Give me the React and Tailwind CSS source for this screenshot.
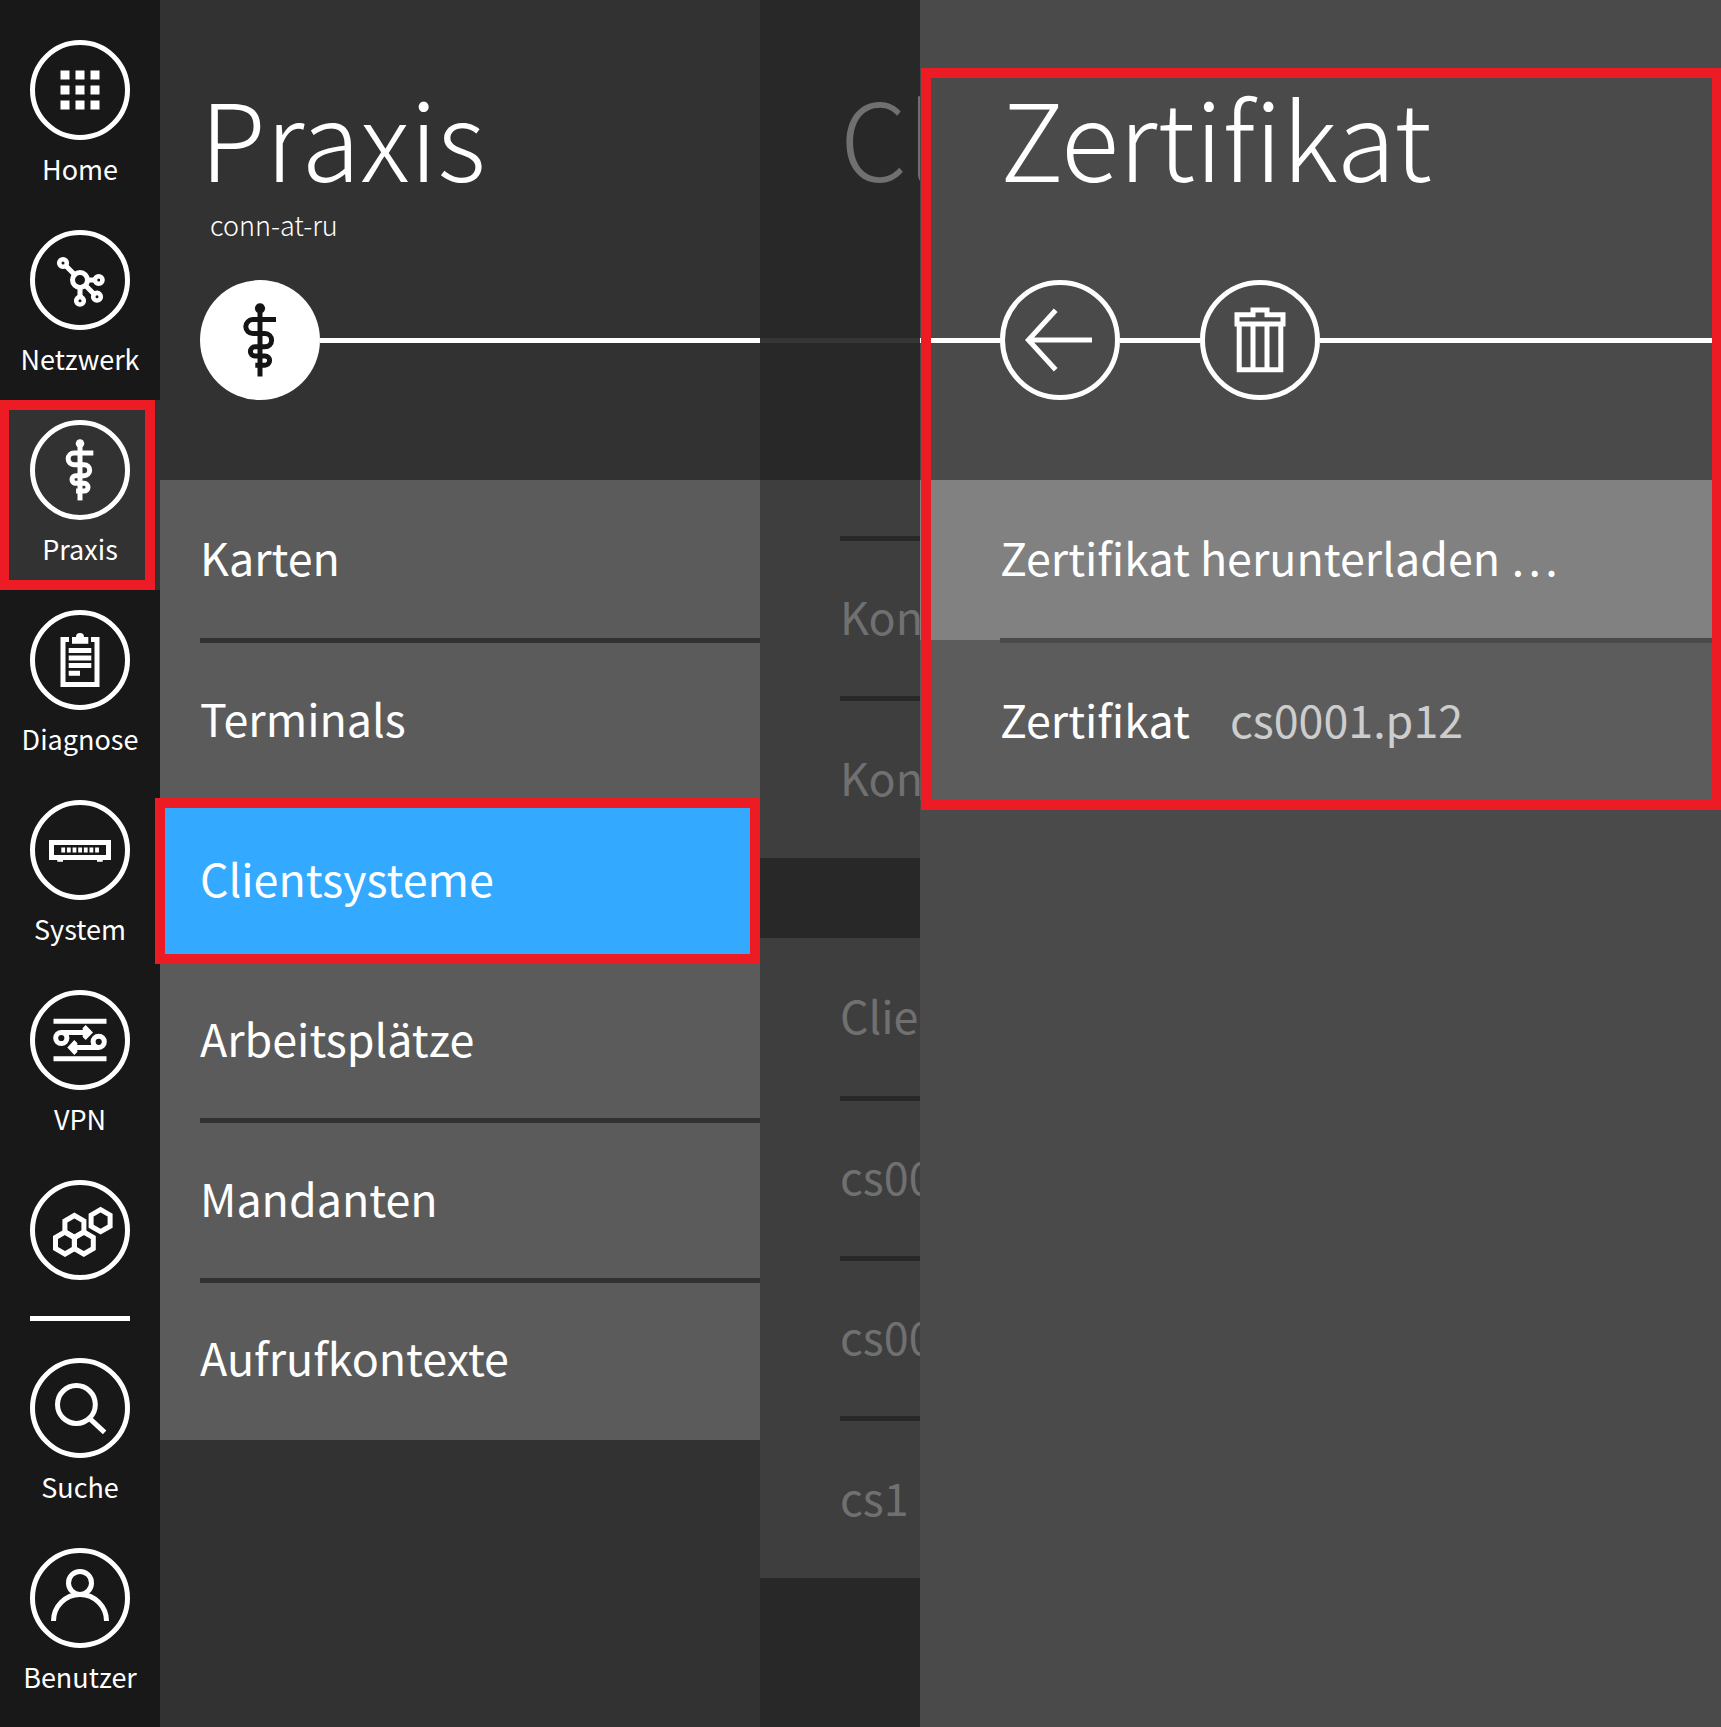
const FONT = "font-['Noto_Sans_CJK_SC','Source_Sans_Pro',sans-serif]";

function Rod({ className, stroke }) {
  return (
    <svg viewBox="0 0 120 120" className={className} fill="none" stroke="currentColor" strokeWidth={stroke}>
      <circle cx="60" cy="28.3" r="5.1" fill="currentColor" stroke="none" />
      <path d="M60 30V96.5" />
      <path d="M76 39.6H52.8a7 7 0 0 0 0 14H65a6.6 6.6 0 0 1 0 13.2H55a4.6 4.6 0 0 0 0 9.2H65a4.6 4.6 0 0 1 0 9.2H55.3" />
    </svg>
  );
}

function hex(cx, cy) {
  return `M${cx} ${cy - 11}l9.5 5.5v11l-9.5 5.5l-9.5 -5.5v-11z`;
}

const glyphs = {
  home: (
    <g fill="currentColor" stroke="none">
      {[30.5, 45.5, 60.5].map((y) =>
        [30.5, 45.5, 60.5].map((x) => <rect key={`${x}-${y}`} x={x} y={y} width="9" height="9" />)
      )}
    </g>
  ),
  network: (
    <g>
      <circle cx="50" cy="50" r="7.5" />
      <path d="M36 36L45 45M57 50H64M50 57V66M55 55L64 64" />
      <g strokeWidth="4.6">
        <circle cx="33" cy="33" r="3.8" />
        <circle cx="68.7" cy="50" r="3.8" />
        <circle cx="50" cy="70.7" r="3.8" />
        <circle cx="67" cy="66.7" r="3.8" />
      </g>
    </g>
  ),
  clipboard: (
    <g>
      <path d="M39 29.5H33V74.5H67V29.5H61" />
      <path d="M42 33.8V27H46a4 4 0 0 1 8 0H58.3V33.8z" fill="currentColor" stroke="none" />
      <path d="M38.7 40.5H61.3M38.7 48H61.3M38.7 55.6H61.3M38.7 63.2H50" />
    </g>
  ),
  system: (
    <g>
      <rect x="21.5" y="42.5" width="57" height="15" />
      <path d="M27.3 60.8H33M67 60.8H72.7" strokeWidth="2" />
      <path d="M31.3 50H69" strokeDasharray="3.8 1.84" />
    </g>
  ),
  vpn: (
    <g>
      <path d="M23.5 31.2H76.5M23.5 68.8H76.5" />
      <circle cx="31.3" cy="48" r="5.6" />
      <circle cx="68.7" cy="51.8" r="5.6" />
      <path d="M31.3 42.4H55M68.7 57.4H45" />
      <path d="M52.7 38L55.7 35L63 42.4L55.7 50L52.7 47zM47.3 53L44.3 50L37.3 57.4L44.3 65L47.3 62z" fill="currentColor" stroke="none" />
    </g>
  ),
  modules: (
    <g>
      <path d={hex(44.4, 46.5)} />
      <path d={hex(35, 63)} />
      <path d={hex(53.8, 63)} />
      <path d={hex(70.6, 40.7)} />
    </g>
  ),
  search: (
    <g>
      <circle cx="46.4" cy="46.5" r="18.9" />
      <path d="M59.5 60.3L74.6 74.4" />
    </g>
  ),
  user: (
    <g>
      <circle cx="50" cy="34.9" r="11.5" />
      <path d="M23.5 73A26.5 26.5 0 0 1 76.5 73" />
    </g>
  ),
};

function NavItem({ icon, label, active }) {
  return (
    <div className={`relative flex h-[190px] w-40 shrink-0 flex-col items-center pt-5 ${active ? "bg-[#323232]" : ""}`}>
      <div className="h-[100px] w-[100px] rounded-full border-[5px] border-white">
        {icon === "rod" ? (
          <Rod className="-m-[5px] h-[100px] w-[100px]" stroke="6" />
        ) : (
          <svg viewBox="0 0 100 100" className="-m-[5px] h-[100px] w-[100px]" fill="none" stroke="currentColor" strokeWidth="5">
            {glyphs[icon]}
          </svg>
        )}
      </div>
      {label && <div className="mt-[9px] text-[27px] leading-[40px] whitespace-nowrap">{label}</div>}
      {active && <div className="absolute top-0 -left-px h-[190px] w-[156px] border-[10px] border-[#ed1c24]" />}
    </div>
  );
}

function Row({ children, indent, line, bg, last, pad = "pb-1" }) {
  return (
    <div className={`flex h-40 flex-col ${indent} ${bg || ""}`}>
      <div className={`flex h-[158px] shrink-0 items-center gap-10 text-[44.8px] leading-[45px] whitespace-nowrap ${pad}`}>{children}</div>
      {!last && <div className={`relative z-10 h-[5px] shrink-0 ${line}`} />}
    </div>
  );
}

function Sidebar() {
  return (
    <nav className="flex w-40 shrink-0 flex-col bg-[#181818] pt-5">
      <NavItem icon="home" label="Home" />
      <NavItem icon="network" label="Netzwerk" />
      <NavItem icon="rod" label="Praxis" active />
      <NavItem icon="clipboard" label="Diagnose" />
      <NavItem icon="system" label="System" />
      <NavItem icon="vpn" label="VPN" />
      <div className="h-[156px] shrink-0">
        <NavItem icon="modules" />
      </div>
      <div className="mx-[30px] mb-[17px] h-[5px] shrink-0 bg-white" />
      <NavItem icon="search" label="Suche" />
      <NavItem icon="user" label="Benutzer" />
    </nav>
  );
}

function PraxisPanel() {
  const entries = ["Karten", "Terminals", "Clientsysteme", "Arbeitsplätze", "Mandanten", "Aufrufkontexte"];
  return (
    <section className="w-[600px] shrink-0 bg-[#323232]">
      <header className="h-[480px] pl-10">
        <h1 className="h-[195px] pt-[82px] text-[107.3px] leading-[108px] font-light">Praxis</h1>
        <div className="h-[85px] pt-[8px] pl-[10px] text-[27px] leading-[44px] font-light">conn-at-ru</div>
        <div className="flex items-center">
          <div className="h-[120px] w-[120px] rounded-full bg-white text-[#141414]">
            <Rod className="h-[120px] w-[120px]" stroke="5" />
          </div>
          <div className="mt-px h-[5px] flex-1 bg-white" />
        </div>
      </header>
      <div className="h-[960px] bg-[#5b5b5b]">
        {entries.map((e, i) =>
          e === "Clientsysteme" ? (
            <div key={e} className="relative bg-[#33a9ff]">
              <Row indent="pl-10" last>{e}</Row>
              <div className="absolute -top-[2px] -left-[5px] z-20 h-[166px] w-[605px] border-[10px] border-[#ed1c24]" />
            </div>
          ) : (
            <Row
              key={e}
              indent="pl-10"
              line="bg-[#323232]"
              last={i === entries.length - 1}
              pad={i === 0 || i === entries.length - 1 ? "pb-1.5" : "pb-1"}
            >
              {e}
            </Row>
          )
        )}
      </div>
    </section>
  );
}

function DimmedPanel() {
  return (
    <section className="w-40 shrink-0 overflow-hidden bg-[#282828] text-[#707070]">
      <header className="h-[480px]">
        <h1 className="h-[338px] pt-[82px] pl-20 text-[107.3px] leading-[108px] font-light whitespace-nowrap">Cl</h1>
        <div className="h-[5px] bg-[#353535]" />
      </header>
      <div className="h-[378px] bg-[#3e3e3e] pt-[56px]">
        <div className="ml-20 h-[5px] bg-[#282828]" />
        <div className="-mt-[3px]">
          <Row indent="pl-20" line="bg-[#282828]">Kon</Row>
          <Row indent="pl-20" pad="pb-0.5" last>Kon</Row>
        </div>
      </div>
      <div className="mt-20 h-[640px] bg-[#3e3e3e]">
        <Row indent="pl-20" line="bg-[#282828]" pad="pb-1.5">Clie</Row>
        <Row indent="pl-20" line="bg-[#282828]">cs00</Row>
        <Row indent="pl-20" line="bg-[#282828]">cs00</Row>
        <Row indent="pl-20" pad="pb-0.5" last>cs1</Row>
      </div>
    </section>
  );
}

function CertificatePanel() {
  return (
    <section className="relative w-[801px] shrink-0 bg-[#4a4a4a]">
      <header className="h-[480px]">
        <h1 className="h-[280px] pt-[82px] pl-20 text-[107.3px] leading-[108px] font-light [font-variant-ligatures:none]">
          Zertifikat
        </h1>
        <div className="flex items-center">
          <div className="mt-px h-[5px] w-20 bg-white" />
          <div className="h-[120px] w-[120px] rounded-full border-[5px] border-white">
            <svg viewBox="0 0 120 120" className="-m-[5px] h-[120px] w-[120px]" fill="none" stroke="currentColor" strokeWidth="5">
              <path d="M55.7 30.2L28.4 60L55.7 89.8M28.4 60H92" />
            </svg>
          </div>
          <div className="mt-px h-[5px] w-20 bg-white" />
          <div className="h-[120px] w-[120px] rounded-full border-[5px] border-white">
            <svg viewBox="0 0 120 120" className="-m-[5px] h-[120px] w-[120px]" fill="none" stroke="currentColor" strokeWidth="5">
              <path d="M53 34.7V30H67V34.7H83V44H37V34.7zM39.2 44V89.8H80.8V44M53 44V90M67 44V90" />
            </svg>
          </div>
          <div className="mt-px h-[5px] flex-1 bg-white" />
        </div>
      </header>
      <Row indent="pl-20" line="bg-[#4a4a4a]" bg="bg-[#818181]" pad="pb-1.5">Zertifikat herunterladen …</Row>
      <Row indent="pl-20" bg="bg-[#5c5c5c]" pad="pb-0.5" last>
        <span>Zertifikat</span>
        <span className="text-[#cdcdcd]">cs0001.p12</span>
      </Row>
      <div className="absolute top-[68px] left-px z-20 h-[742px] w-[801px] border-[10px] border-[#ed1c24]" />
    </section>
  );
}

export default function App() {
  return (
    <div className={`flex h-[1727px] w-[1721px] overflow-hidden bg-[#282828] text-white ${FONT}`}>
      <Sidebar />
      <PraxisPanel />
      <DimmedPanel />
      <CertificatePanel />
    </div>
  );
}
